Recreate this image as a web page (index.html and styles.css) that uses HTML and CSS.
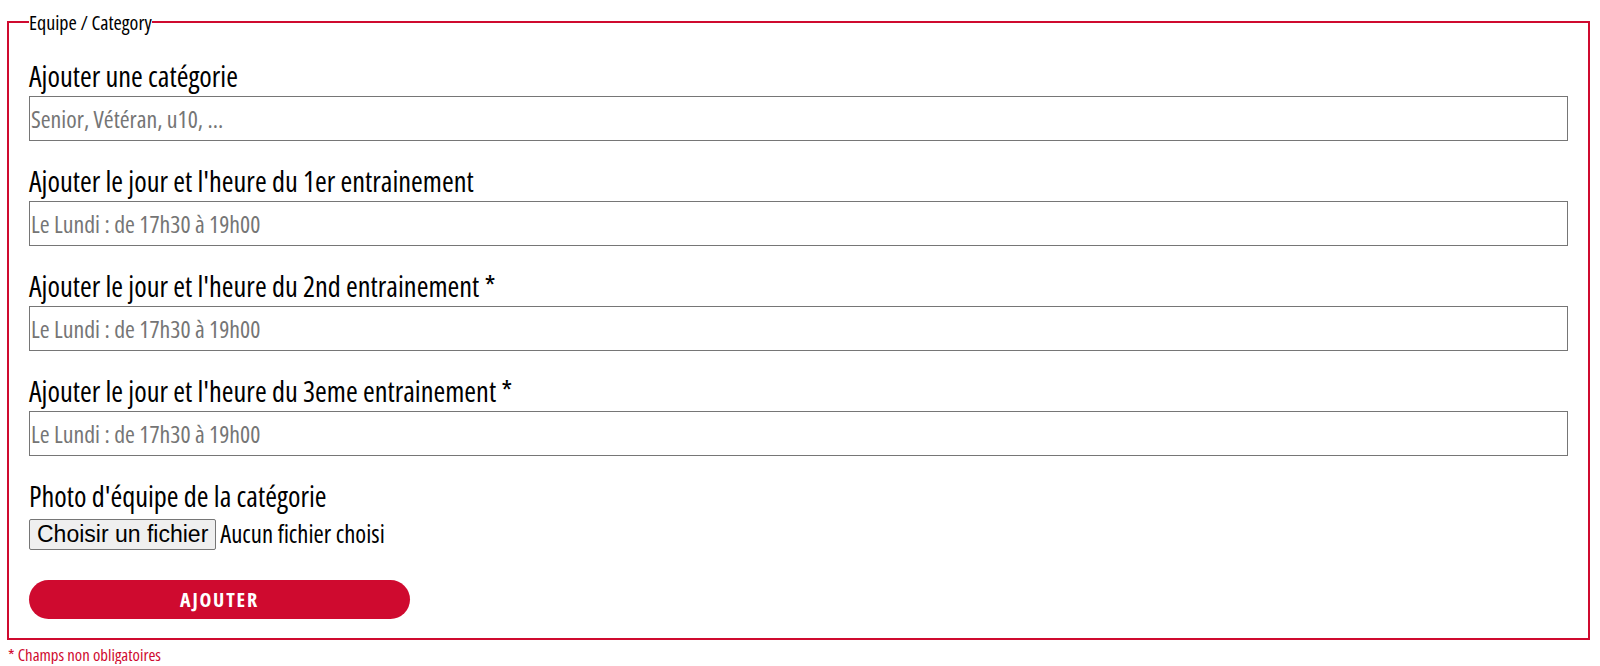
FILE: index.html
```html
<!DOCTYPE html>
<html lang="fr">
<head>
<meta charset="utf-8">
<title>Equipe / Category</title>
<link rel="stylesheet" href="styles.css">
</head>
<body>
<form class="form">
  <fieldset class="box">
    <legend class="box-title">Equipe / Category</legend>
    <div class="field">
      <label class="field-label" for="cat">Ajouter une catégorie</label>
      <input class="field-input" id="cat" type="text" placeholder="Senior, Vétéran, u10, ...">
    </div>
    <div class="field">
      <label class="field-label" for="t1">Ajouter le jour et l'heure du 1er entrainement</label>
      <input class="field-input" id="t1" type="text" placeholder="Le Lundi : de 17h30 à 19h00">
    </div>
    <div class="field">
      <label class="field-label" for="t2">Ajouter le jour et l'heure du 2nd entrainement *</label>
      <input class="field-input" id="t2" type="text" placeholder="Le Lundi : de 17h30 à 19h00">
    </div>
    <div class="field">
      <label class="field-label" for="t3">Ajouter le jour et l'heure du 3eme entrainement *</label>
      <input class="field-input" id="t3" type="text" placeholder="Le Lundi : de 17h30 à 19h00">
    </div>
    <div class="field">
      <span class="field-label">Photo d'équipe de la catégorie</span>
      <div class="file-row">
        <button type="button" class="file-btn">Choisir un fichier</button>
        <span class="file-name">Aucun fichier choisi</span>
      </div>
    </div>
    <button type="submit" class="submit">Ajouter</button>
  </fieldset>
  <p class="note">* Champs non obligatoires</p>
</form>
</body>
</html>
```

FILE: styles.css
```css
html, body {
  margin: 0;
  padding: 0;
  background: #ffffff;
}

body {
  font-family: "Open Sans", "Roboto Condensed", "DejaVu Sans Condensed", sans-serif;
  font-stretch: 75%;
  font-weight: 500;
  color: #000000;
}

.form {
  padding-top: 9px;
}

.box {
  margin: 0 10px 0 7px;
  border: 2px solid #cf0a2f;
  padding: 23px 20px 19px 20px;
  min-width: 0;
}

.box-title {
  padding: 2px 0 0 0;
  font-size: 20px;
  line-height: 24px;
  color: #000;
}

.field {
  display: flex;
  flex-direction: column;
  margin-bottom: 22px;
}

.field-label {
  display: block;
  font-size: 28.4px;
  line-height: 36px;
  margin-bottom: 2px;
  color: #000;
}

.field-input {
  box-sizing: border-box;
  height: 45px;
  width: 100%;
  margin: 0;
  padding: 0 1px;
  border: 1px solid #767676;
  border-radius: 0;
  font-family: inherit;
  font-stretch: inherit;
  font-weight: 500;
  font-size: 23.8px;
  color: #000;
  background: #fff;
  outline: none;
}

.field-input::placeholder {
  color: #757575;
  opacity: 1;
}

.file-row {
  display: flex;
  align-items: center;
  height: 37px;
  gap: 4px;
}

.file-btn {
  box-sizing: border-box;
  height: 31px;
  margin: 0;
  padding: 0 7px;
  border: 1px solid #767676;
  border-radius: 2px;
  background: #efefef;
  font-family: "Liberation Sans", Arial, sans-serif;
  font-stretch: normal;
  font-weight: normal;
  font-size: 23px;
  line-height: 29px;
  color: #000;
}

.file-name {
  font-size: 24.7px;
  line-height: 1;
  color: #000;
}

.submit {
  display: block;
  box-sizing: border-box;
  width: 381px;
  height: 39px;
  margin: 27px 0 0 0;
  padding: 0;
  border: none;
  border-radius: 20px;
  background: #cf0a2f;
  color: #ffffff;
  font-family: inherit;
  font-stretch: inherit;
  font-weight: 700;
  font-size: 20px;
  letter-spacing: 1.8px;
  text-transform: uppercase;
  cursor: pointer;
}

.note {
  margin: 6px 0 0 8px;
  font-size: 16.8px;
  line-height: 18px;
  color: #cf0a2f;
}
```
